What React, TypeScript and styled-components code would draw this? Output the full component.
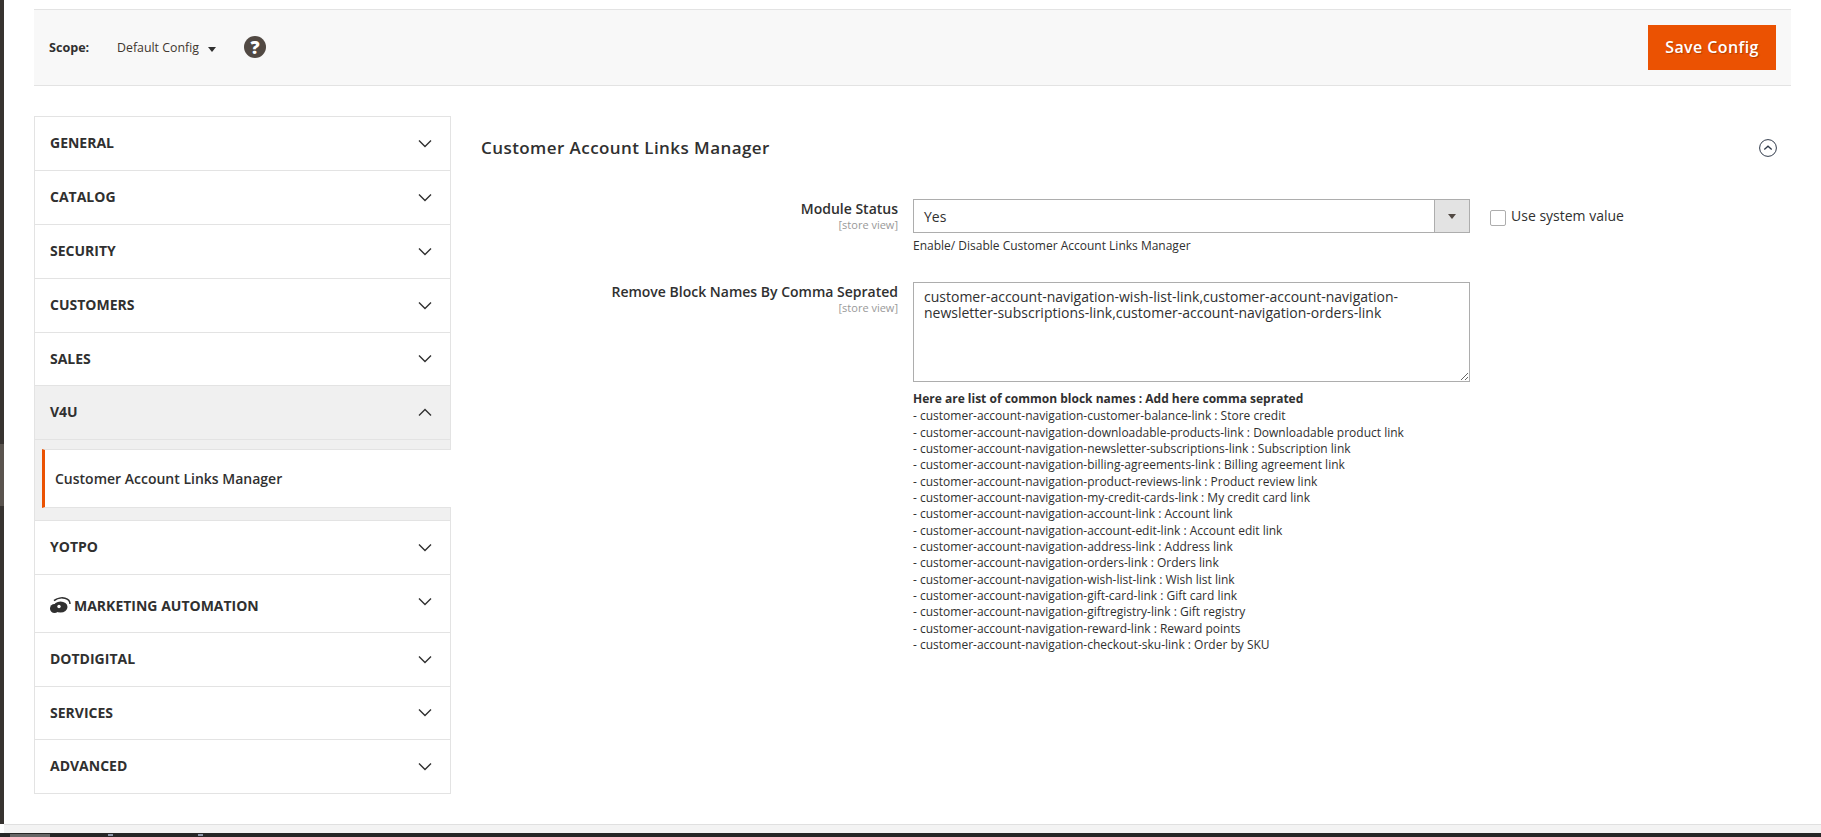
import React from "react";
import styled, { createGlobalStyle } from "styled-components";

const Global = createGlobalStyle`
  html, body { margin: 0; padding: 0; height: 837px; overflow: hidden; background: #fff; }
  * { box-sizing: border-box; }
  body { font-family: "Open Sans", "Noto Sans", sans-serif; color: #303030; font-size: 14px; }
`;

const Page = styled.div`
  width: 1821px;
  height: 837px;
  display: flex;
  flex-direction: column;
`;
const Upper = styled.div`
  flex: 1;
  display: flex;
  min-height: 0;
`;
const Strip = styled.div`
  width: 4px;
  flex: none;
  background: linear-gradient(#373330 0 444px, #5a544e 444px 506px, #373330 506px);
`;
const Main = styled.main`
  flex: 1;
  padding: 9px 30px 0;
  min-width: 0;
`;
const ScopeBar = styled.header`
  height: 77px;
  background: #f8f8f8;
  border-top: 1px solid #e3e3e3;
  border-bottom: 1px solid #e3e3e3;
  display: flex;
  align-items: center;
  padding: 0 15px;
`;
const ScopeLabel = styled.span`
  font-weight: 700;
  font-size: 12.6px;
  width: 68px;
  margin-bottom: 1px;
`;
const ScopeValue = styled.span`
  font-size: 12.35px;
  color: #41362f;
  margin-bottom: 1px;
`;
const Caret = styled.span`
  width: 0;
  height: 0;
  margin: 3px 0 0 9px;
  border-left: 4px solid transparent;
  border-right: 4px solid transparent;
  border-top: 5px solid #303030;
`;
const Help = styled.span`
  margin: 0 0 2px 28px;
  width: 22px;
  height: 22px;
  border-radius: 50%;
  background: #514943;
  color: #fff;
  font-weight: 800;
  font-size: 18px;
  line-height: 22px;
  text-align: center;
`;
const SaveButton = styled.button`
  margin-left: auto;
  width: 128px;
  height: 45px;
  margin-top: -1px;
  background: #eb5202;
  border: 0;
  color: #fff;
  font-family: inherit;
  font-size: 16px;
  font-weight: 600;
  letter-spacing: 0.4px;
  text-shadow: 1px 1px 1px rgba(0, 0, 0, 0.25);
  padding: 0;
`;
const Columns = styled.div`
  display: flex;
  margin-top: 30px;
`;
const Nav = styled.nav`
  width: 417px;
  flex: none;
  height: 678px;
  border: 1px solid #e3e3e3;
`;
const NavRow = styled.div<{ $open?: boolean; $h: number }>`
  height: ${(p) => p.$h}px;
  padding: 0 15px;
  display: flex;
  align-items: center;
  justify-content: space-between;
  border-bottom: 1px solid #e3e3e3;
  background: ${(p) => (p.$open ? "#f0f0f0" : "#fff")};
  font-weight: 700;
  font-size: 14px;
  color: #303030;
  &:last-child { border-bottom: 0; }
`;
const NavLabel = styled.span<{ $shift?: number }>`
  display: flex;
  align-items: center;
  gap: 3px;
  margin-top: ${(p) => p.$shift ?? -2}px;
`;
const Chevron = styled.svg<{ $shift?: number }>`
  width: 14px;
  height: 9px;
  fill: none;
  stroke: #303030;
  stroke-width: 1.4;
  margin-right: 3px;
  margin-top: ${(p) => p.$shift ?? -1}px;
`;
const SubGroup = styled.div`
  height: 81px;
  background: #f0f0f0;
  border-bottom: 1px solid #e3e3e3;
  padding: 9px 0 12px 7px;
`;
const SubItem = styled.div`
  height: 59px;
  margin-right: -1px;
  background: #fff;
  border-top: 1px solid #e3e3e3;
  border-bottom: 1px solid #e3e3e3;
  border-left: 3px solid #eb5202;
  padding-left: 10px;
  display: flex;
  align-items: center;
  font-size: 14px;
  font-weight: 600;
  color: #303030;
`;
const Content = styled.section`
  flex: 1;
  padding: 0 0 0 30px;
  min-width: 0;
`;
const SectionHead = styled.div`
  display: flex;
  align-items: center;
  justify-content: space-between;
  height: 63px;
`;
const SectionTitle = styled.h2`
  margin: 0;
  font-size: 17px;
  font-weight: 600;
  letter-spacing: 0.43px;
  color: #303030;
`;
const Collapse = styled.svg`
  width: 18px;
  height: 18px;
  fill: none;
  stroke: #303a4a;
  stroke-width: 1;
  margin-right: 14px;
  margin-top: 1px;
`;
const FormRow = styled.div<{ $mt: number }>`
  display: grid;
  grid-template-columns: 417px 557px auto;
  column-gap: 15px;
  margin-top: ${(p) => p.$mt}px;
`;
const LabelCol = styled.div`
  text-align: right;
  padding-top: 1px;
`;
const FieldLabel = styled.div`
  font-size: 14px;
  font-weight: 600;
  line-height: 18px;
  color: #303030;
`;
const ScopeNote = styled.div`
  font-size: 11px;
  line-height: 13px;
  color: #999;
`;
const Select = styled.div`
  height: 34px;
  border: 1px solid #adadad;
  display: flex;
  align-items: center;
  justify-content: space-between;
  font-size: 14px;
  padding-left: 10px;
`;
const SelectArrow = styled.span`
  width: 35px;
  height: 100%;
  background: #e3e3e3;
  border-left: 1px solid #adadad;
  display: flex;
  align-items: center;
  justify-content: center;
  &::after {
    content: "";
    border-left: 4px solid transparent;
    border-right: 4px solid transparent;
    border-top: 5px solid #514943;
  }
`;
const Note = styled.div`
  font-size: 12px;
  line-height: 16px;
  margin-top: 5px;
  color: #303030;
`;
const SystemValue = styled.label`
  display: flex;
  align-items: flex-start;
  gap: 5px;
  font-size: 14px;
  line-height: 18px;
  margin: 8px 0 0 5px;
  color: #303030;
`;
const Check = styled.span`
  width: 16px;
  height: 16px;
  margin-top: 3px;
  border: 1px solid #adadad;
  border-radius: 2px;
  background: #fff;
`;
const TextBox = styled.textarea`
  display: block;
  width: 557px;
  height: 100px;
  border: 1px solid #adadad;
  padding: 6px 10px;
  font-family: inherit;
  font-size: 14px;
  line-height: 16px;
  color: #303030;
  background: #fff;
  outline: none;
  resize: vertical;
  border-radius: 0;
`;
const HelpList = styled.div`
  font-size: 12px;
  line-height: 16.35px;
  margin-top: 9px;
  color: #303030;
  white-space: nowrap;
`;
const HelpHead = styled.div`
  font-weight: 700;
  margin-bottom: 1px;
`;
const Footer = styled.footer`
  flex: none;
  height: 9px;
  margin-left: 4px;
  background: #f3f3f3;
  border-top: 1px solid #e0e0e0;
`;
const Taskbar = styled.div`
  flex: none;
  height: 4px;
  background: #262626;
  display: flex;
  align-items: flex-end;
`;
const TaskItem = styled.span`
  width: 40px;
  height: 3px;
  margin-left: 10px;
  background: #666;
`;
const TaskIcon = styled.span<{ $gap: number }>`
  width: 5px;
  height: 2px;
  margin-left: ${(p) => p.$gap}px;
  margin-bottom: 1px;
  background: #8a93a5;
`;

const Down = () => (
  <Chevron viewBox="0 0 14 9"><path d="M1 1.5 7 7.5 13 1.5" /></Chevron>
);
const Up = () => (
  <Chevron viewBox="0 0 14 9"><path d="M1 7.5 7 1.5 13 7.5" /></Chevron>
);

const Logo = () => (
  <svg width="21" height="17" viewBox="0 0 21 17">
    <circle cx="4.5" cy="11.5" r="4.5" fill="#303030" />
    <ellipse cx="10.5" cy="10" rx="7" ry="5.6" fill="#303030" />
    <circle cx="9" cy="9.5" r="1.7" fill="#fff" />
    <path d="M4 3.6C7 1 12 .4 15 1.2 18 2 20 4 20 7" fill="none" stroke="#303030" strokeWidth="1.5" />
  </svg>
);

const helpLines = [
  "- customer-account-navigation-customer-balance-link : Store credit",
  "- customer-account-navigation-downloadable-products-link : Downloadable product link",
  "- customer-account-navigation-newsletter-subscriptions-link : Subscription link",
  "- customer-account-navigation-billing-agreements-link : Billing agreement link",
  "- customer-account-navigation-product-reviews-link : Product review link",
  "- customer-account-navigation-my-credit-cards-link : My credit card link",
  "- customer-account-navigation-account-link : Account link",
  "- customer-account-navigation-account-edit-link : Account edit link",
  "- customer-account-navigation-address-link : Address link",
  "- customer-account-navigation-orders-link : Orders link",
  "- customer-account-navigation-wish-list-link : Wish list link",
  "- customer-account-navigation-gift-card-link : Gift card link",
  "- customer-account-navigation-giftregistry-link : Gift registry",
  "- customer-account-navigation-reward-link : Reward points",
  "- customer-account-navigation-checkout-sku-link : Order by SKU",
];

const topItems: [string, number][] = [
  ["GENERAL", 54],
  ["CATALOG", 54],
  ["SECURITY", 54],
  ["CUSTOMERS", 54],
  ["SALES", 53],
];
const bottomItems: [string, number][] = [
  ["DOTDIGITAL", 54],
  ["SERVICES", 53],
  ["ADVANCED", 53],
];

export default function App() {
  return (
    <Page>
      <Global />
      <Upper>
        <Strip />
        <Main>
          <ScopeBar>
            <ScopeLabel>Scope:</ScopeLabel>
            <ScopeValue>Default Config</ScopeValue>
            <Caret />
            <Help>?</Help>
            <SaveButton>Save Config</SaveButton>
          </ScopeBar>
          <Columns>
            <Nav>
              {topItems.map(([t, h]) => (
                <NavRow key={t} $h={h}>
                  <NavLabel>{t}</NavLabel>
                  <Down />
                </NavRow>
              ))}
              <NavRow $open $h={54}>
                <NavLabel>V4U</NavLabel>
                <Up />
              </NavRow>
              <SubGroup>
                <SubItem>Customer Account Links Manager</SubItem>
              </SubGroup>
              <NavRow $h={54}>
                <NavLabel>YOTPO</NavLabel>
                <Down />
              </NavRow>
              <NavRow $h={58}>
                <NavLabel $shift={4}>
                  <Logo />
                  MARKETING AUTOMATION
                </NavLabel>
                <Chevron viewBox="0 0 14 9" $shift={-5}>
                  <path d="M1 1.5 7 7.5 13 1.5" />
                </Chevron>
              </NavRow>
              {bottomItems.map(([t, h]) => (
                <NavRow key={t} $h={h}>
                  <NavLabel>{t}</NavLabel>
                  <Down />
                </NavRow>
              ))}
            </Nav>
            <Content>
              <SectionHead>
                <SectionTitle>Customer Account Links Manager</SectionTitle>
                <Collapse viewBox="0 0 18 18">
                  <circle cx="9" cy="9" r="8.4" />
                  <path d="M5.3 10.5 9 7.2 12.7 10.5" strokeWidth="1.3" />
                </Collapse>
              </SectionHead>
              <FormRow $mt={20}>
                <LabelCol>
                  <FieldLabel>Module Status</FieldLabel>
                  <ScopeNote>[store view]</ScopeNote>
                </LabelCol>
                <div>
                  <Select>
                    Yes
                    <SelectArrow />
                  </Select>
                  <Note>Enable/ Disable Customer Account Links Manager</Note>
                </div>
                <SystemValue>
                  <Check />
                  Use system value
                </SystemValue>
              </FormRow>
              <FormRow $mt={28}>
                <LabelCol>
                  <FieldLabel>Remove Block Names By Comma Seprated</FieldLabel>
                  <ScopeNote>[store view]</ScopeNote>
                </LabelCol>
                <div>
                  <TextBox
                    readOnly
                    value="customer-account-navigation-wish-list-link,customer-account-navigation-newsletter-subscriptions-link,customer-account-navigation-orders-link"
                  />
                  <HelpList>
                    <HelpHead>Here are list of common block names : Add here comma seprated</HelpHead>
                    {helpLines.map((l) => (
                      <div key={l}>{l}</div>
                    ))}
                  </HelpList>
                </div>
              </FormRow>
            </Content>
          </Columns>
        </Main>
      </Upper>
      <Footer />
      <Taskbar>
        <TaskItem />
        <TaskIcon $gap={58} />
        <TaskIcon $gap={85} />
      </Taskbar>
    </Page>
  );
}
